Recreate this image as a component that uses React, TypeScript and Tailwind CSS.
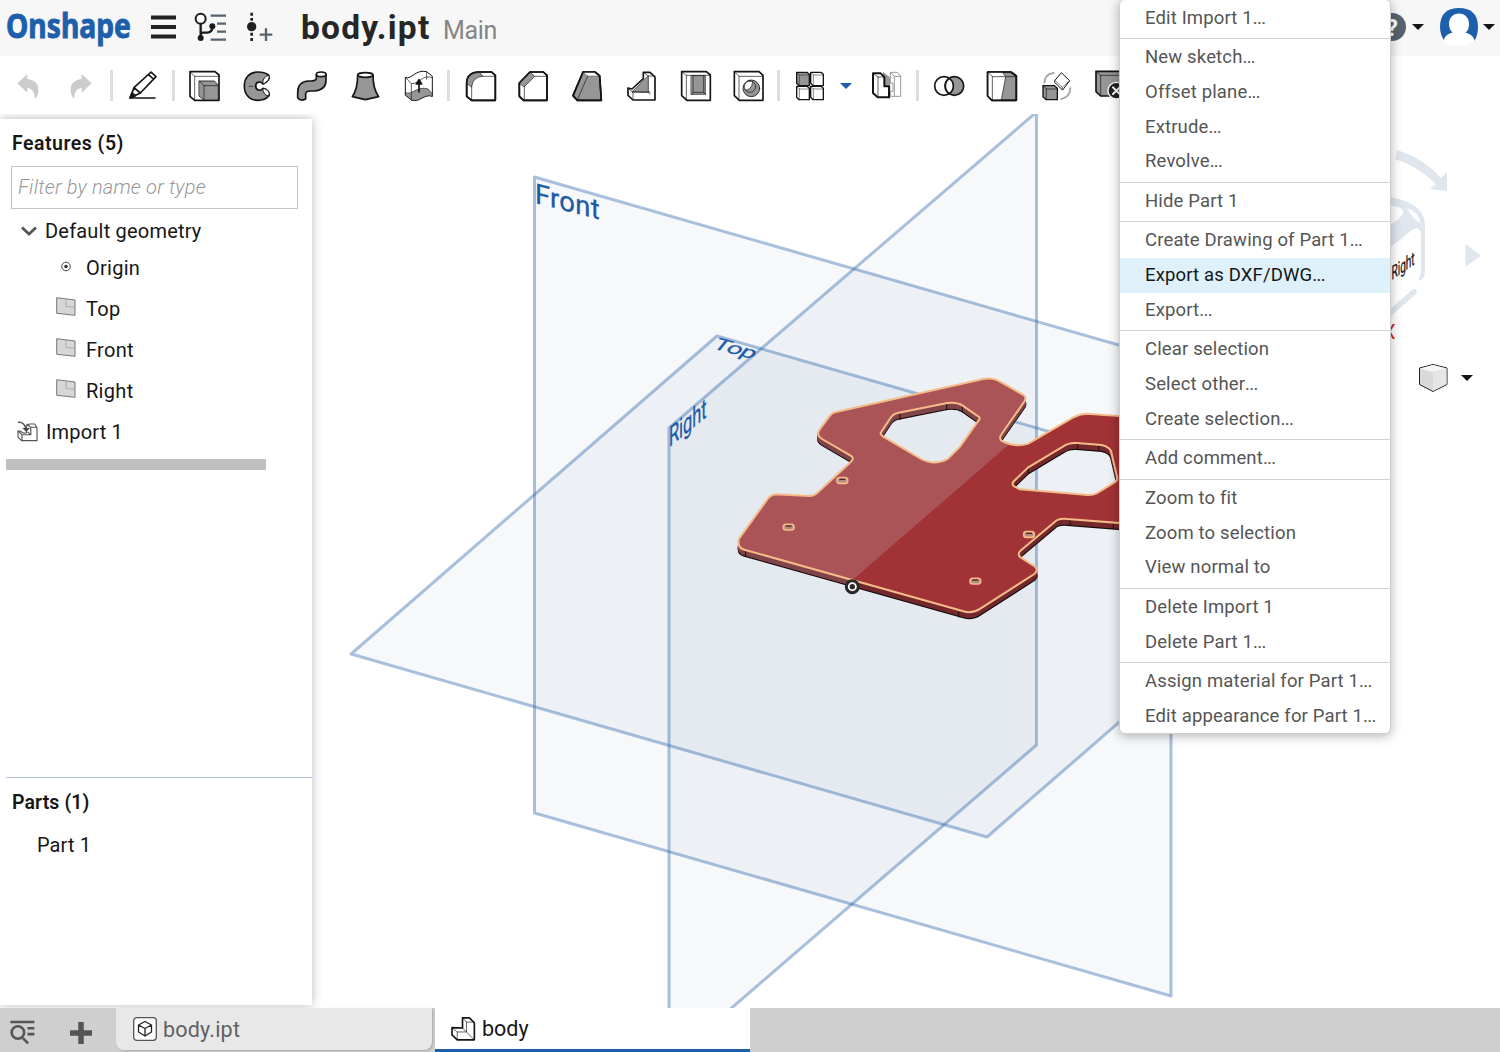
import type { ReactNode } from "react";

function Icon({ box, className = "", children }: { box: string; className?: string; children: ReactNode }) {
  return (
    <svg
      viewBox={box}
      fill="none"
      stroke="#151515"
      strokeWidth="5"
      strokeLinejoin="round"
      strokeLinecap="round"
      className={`h-[30px] w-[30px] shrink-0 overflow-visible ${className}`}
    >
      {children}
    </svg>
  );
}

function Divider({ className }: { className: string }) {
  return <div className={`h-[31px] w-[3px] shrink-0 bg-[#dedede] ${className}`} />;
}

const G = "#969696";

function Caret({ className }: { className: string }) {
  return (
    <svg viewBox="0 0 12 6" className={`h-1.5 w-3 shrink-0 ${className}`}>
      <path d="M0 0H12L6 6Z" fill="currentColor" />
    </svg>
  );
}

function Header() {
  return (
    <header className="flex h-14 shrink-0 items-center bg-[#f7f7f7] pb-[2px]">
      <svg viewBox="0 0 126 44" className="ml-[6px] h-11 w-[126px] overflow-visible">
        <text
          x="0"
          y="32.5"
          textLength="125"
          lengthAdjust="spacingAndGlyphs"
          fill="#1d5fab"
          stroke="#1d5fab"
          strokeWidth="0.9"
          className="font-['Noto_Sans'] text-[34px] font-bold"
        >
          Onshape
        </text>
      </svg>
      <svg viewBox="0 0 26 26" className="ml-[18px] h-[26px] w-[26px]">
        <path d="M1 3.5H26M1 13H26M1 22.5H26" stroke="#222" strokeWidth="4" />
      </svg>
      <svg viewBox="583 36 99 90" fill="none" className="ml-[18px] h-[30px] w-[33px] overflow-visible">
        <path d="M633 47H679M652 71H679M652 95H679M633 119H679" stroke="#56626d" strokeWidth="7" />
        <circle cx="603" cy="56" r="15" stroke="#1b1b1b" strokeWidth="6" fill="#fff" />
        <path d="M603 71V112M603 105Q604 97 613 98H624Q638 96 638 82" stroke="#1b1b1b" strokeWidth="7" />
        <circle cx="603" cy="114" r="9" fill="#1b1b1b" />
        <circle cx="638" cy="79" r="9" fill="#1b1b1b" />
      </svg>
      <svg viewBox="738 36 81 90" fill="none" className="ml-[19px] h-[30px] w-[27px]">
        <path d="M755 38V47M755 54V62M755 98V107M755 114V123" stroke="#222" strokeWidth="8" />
        <circle cx="755" cy="80" r="14" fill="#222" />
        <path d="M779 104H817M798 85V123" stroke="#56626d" strokeWidth="7" />
      </svg>
      <h1 className="ml-[28px] mt-[1px] w-[142px] whitespace-nowrap text-[33.5px] font-bold leading-none tracking-[1.2px] text-[#262626]">body.ipt</h1>
      <span className="mt-[7px] text-[25px] leading-none tracking-[-0.3px] text-[#858585]">Main</span>
      <div className="ml-auto flex items-center pr-[5px]">
        <svg viewBox="0 0 28 28" className="h-7 w-7">
          <circle cx="14" cy="14" r="14" fill="#56626d" />
          <text x="14" y="22.5" textAnchor="middle" fill="#fff" className="text-2xl font-bold">
            ?
          </text>
        </svg>
        <Caret className="ml-[6px] text-[#151515]" />
        <svg viewBox="0 0 38 38" className="ml-4 h-[38px] w-[38px]">
          <path d="M5 34Q0 27 0 19C0 6 7 0 19 0S38 6 38 19Q38 27 34 34Z" fill="#1d5fab" />
          <path d="M19 5.500C13 5.500 9 10 9 16C9 20 10.500 22.500 12.500 24.500C7 26 4 29 3.500 33.500Q19 42 35 33.500C34 29 31 26 25.500 24.500C28 22.500 29 20 29 16C29 10 25 5.500 19 5.500Z" fill="#fff" />
        </svg>
        <Caret className="ml-[5px] text-[#151515]" />
      </div>
    </header>
  );
}

function Toolbar() {
  return (
    <div className="flex h-[58px] shrink-0 items-center bg-white pt-px">
      <Icon box="39 210 90 90" className="ml-[13px]">
        <path d="M52 247L82 219V234Q116 238 115 267Q115 283 105 293Q105 264 82 260V275Z" fill="#ccc" stroke="none" />
      </Icon>
      <Icon box="195 210 90 90" className="ml-[22px]">
        <path d="M275 247L245 219V234Q211 238 212 267Q212 283 222 293Q222 264 245 260V275Z" fill="#ccc" stroke="none" />
      </Icon>
      <Divider className="ml-[15px]" />
      <Icon box="384 210 90 90" className="ml-[15px]">
        <path d="M390 291H465M390 291L402 260L453 213L468 227L421 276ZM445 220L460 234M402 260L421 276" />
        <path d="M390 291L396 276L406 284Z" fill="#151515" />
      </Icon>
      <Divider className="ml-[14px]" />
      <Icon box="570 210 90 90" className="ml-[15px]">
        <path d="M570 212H645L657 222V298H584L570 286Z" fill="#fff" />
        <path d="M570 212L584 226H656M584 226V297" strokeWidth="2" />
        <path d="M598 240H642L655 252V297H612L598 286Z" fill={G} strokeWidth="2.500" />
        <path d="M598 240L612 254H655M612 254V297" strokeWidth="2" />
      </Icon>
      <Icon box="726 210 90 90" className="ml-[22px]">
        <path d="M806 223C812 233 801 244 789 249C782 239 767 242 767 255C767 268 782 272 789 262C801 264 812 275 806 285C798 295 786 298 773 298C746 298 733 278 733 255C733 231 748 213 773 213C788 213 799 215 806 223Z" fill={G} />
        <path d="M806 223C800 222 786 233 789 249C801 244 812 233 806 223ZM806 285C800 286 787 277 789 262C801 264 812 275 806 285Z" fill="#fff" strokeWidth="3" />
        <path d="M747 256H758M764 256H770" strokeWidth="2" />
      </Icon>
      <Icon box="21 210 90 90" className="ml-[25px]">
        <path d="M79 221V230Q80 239 65 240H56Q23 241 23 276V290Q31 302 47 294V278Q48 270 61 270H72Q108 268 108 238V221Z" fill={G} />
        <ellipse cx="93.500" cy="220" rx="14.500" ry="7" fill="#fff" />
      </Icon>
      <Icon box="180 210 90 90" className="ml-[23px]">
        <path d="M203 222C203 249 200 268 187 287L226 296L266 287C251 266 249 247 249 222Z" fill={G} />
        <ellipse cx="226" cy="222" rx="23" ry="7" fill="#fff" />
      </Icon>
      <Icon box="342 210 90 90" className="ml-[24px]">
        <path d="M347 230C365 236 377 204 410 212L427 226V286C405 276 388 306 364 297L347 283Z" fill="#fff" strokeWidth="3" />
        <path d="M347 275C365 285 382 253 414 264L427 279V286C405 276 388 306 364 297L347 283Z" fill={G} strokeWidth="2" />
        <path d="M347 230L364 248C387 250 398 218 427 230M364 248V296M410 214V235" strokeWidth="2" />
        <path d="M387 273V239M379 249L387 236L395 249Z" fill="#151515" strokeWidth="5" />
      </Icon>
      <Divider className="ml-[13px]" />
      <Icon box="527 210 90 90" className="ml-[16px]">
        <path d="M529 246Q530 214 566 213H604L615 223V298H544L529 286Z" fill="#fff" />
        <path d="M529 246Q530 214 566 213L578 226Q547 227 544 257Z" fill={G} strokeWidth="2" />
        <path d="M544 257V297M578 226H614" strokeWidth="2" />
        <path d="M529 246Q530 214 566 213H604L615 223V298H544L529 286Z" />
      </Icon>
      <Icon box="684 210 90 90" className="ml-[22px]">
        <path d="M688 246L720 213H760L771 223V298H701L688 286Z" fill="#fff" />
        <path d="M688 246L720 213L734 226L703 257Z" fill={G} strokeWidth="2" />
        <path d="M703 257V297M734 226H770" strokeWidth="2" />
        <path d="M688 246L720 213H760L771 223V298H701L688 286Z" />
      </Icon>
      <Icon box="36 42 90 90" className="ml-[24px]">
        <path d="M69 45H105L119 57L124 130H52L39 116Z" fill={G} />
        <path d="M69 45L83 57H118L105 45Z" fill="#fff" strokeWidth="1" />
        <path d="M83 57L52 129" strokeWidth="2" />
        <path d="M69 45H105L119 57L124 130H52L39 116Z" />
      </Icon>
      <Icon box="201 42 90 90" className="ml-[25px]">
        <path d="M250 46H270L285 60V129H219L204 115V93L216 96L250 65Z" fill="#fff" />
        <path d="M265 57V106L217 105Z" fill={G} strokeWidth="2" />
        <path d="M250 46L265 57H285M204 94L219 107V128M265 106L270 112M217 105H270" strokeWidth="2" />
      </Icon>
      <Icon box="363 42 90 90" className="ml-[24px]">
        <path d="M365 44H439L451 54V130H381L365 116Z" fill="#fff" />
        <path d="M394 56H436V112H394Z" fill={G} strokeWidth="2" />
        <path d="M366 45L379 55H450M379 55V129M399 56V106H431V56M394 112L399 106M436 112L431 106" strokeWidth="2" />
      </Icon>
      <Icon box="522 42 90 90" className="ml-[23px]">
        <path d="M523 44H597L609 55V130H538L523 116Z" fill="#fff" />
        <path d="M523 44L537 58H608M537 58V129" strokeWidth="2" />
        <circle cx="574" cy="94" r="25" fill={G} strokeWidth="2.500" />
        <circle cx="570" cy="89" r="17" fill={G} strokeWidth="2" />
        <path d="M570 72A17 17 0 0 0 556 99Q574 100 578 75Q575 72 570 72Z" fill="#fff" strokeWidth="2" />
      </Icon>
      <Divider className="ml-[13px]" />
      <Icon box="705 42 90 90" className="ml-[15px]">
        {[[710, 46], [752, 46], [710, 88], [752, 88]].map(([x, y], i) => (
          <g key={i} transform={`translate(${x} ${y})`}>
            <path d="M0 0H31L38 6V40H7L0 33Z" fill={i === 0 ? G : "#fff"} strokeWidth="4" />
            <path d="M0 0L8 8H38M8 8V40" strokeWidth="1.500" />
          </g>
        ))}
      </Icon>
      <Caret className="ml-[15px] text-[#1d5fab]" />
      <Icon box="96 42 90 90" className="ml-[20px]">
        <path d="M152 46H172L182 58V118H151V103H159V78H152ZM152 46L163 58H182M163 58V118" fill="#fff" stroke="#999" strokeWidth="3" />
        <path d="M129 44L151 62V127L129 106Z" fill="#999" stroke="none" />
        <path d="M99 49H122L133 60V88H147V121H113L99 108Z" fill="#fff" strokeWidth="6" />
        <path d="M100 50L114 60H132M114 60V120" strokeWidth="2" />
      </Icon>
      <Divider className="ml-[14px]" />
      <Icon box="282 42 90 90" className="ml-[15px]">
        <circle cx="312" cy="87" r="28" fill="#fff" />
        <circle cx="343" cy="87" r="28" fill={G} />
        <path d="M328 64A28 28 0 0 1 328 110A28 28 0 0 1 328 64Z" fill="#fff" />
      </Icon>
      <Icon box="441 42 90 90" className="ml-[23px]">
        <path d="M443 45H513L529 57V130H456L443 117Z" fill={G} />
        <path d="M443 45H487L497 59L484 129H456L443 117Z" fill="#fff" strokeWidth="2" />
        <path d="M444 46L457 59H528M457 59V128" strokeWidth="2" />
        <path d="M443 45H513L529 57V130H456L443 117Z" />
      </Icon>
      <Icon box="603 42 90 90" className="ml-[24px]">
        <path d="M613 77Q614 51 641 48M691 94Q690 120 664 126" stroke="#aaa" strokeWidth="6" />
        <path d="M645 70L664 47L689 71L668 99L645 77Z" fill="#fff" strokeWidth="3" />
        <path d="M645 70L667 91L689 71M667 91V98" strokeWidth="1.500" />
        <path d="M609 86H643L652 94V128H619L609 119Z" fill={G} strokeWidth="4" />
        <path d="M609 86L619 96H652M619 96V128" strokeWidth="2" />
      </Icon>
      <Icon box="765 42 90 90" className="ml-[24px]">
        <path d="M768 43H850V117H782L768 104Z" fill={G} />
        <path d="M768 43L782 55H850M782 55V117" strokeWidth="2" />
        <circle cx="829" cy="101" r="25" fill="#222" stroke="#fff" strokeWidth="4" />
        <path d="M819 91L839 111M839 91L819 111" stroke="#fff" strokeWidth="6" />
      </Icon>
    </div>
  );
}

function PlaneIcon() {
  return (
    <svg viewBox="0 0 20 19" className="h-[19px] w-5">
      <path d="M.7.7L19 3V18.300L.7 16.300Z" fill="#d7d7d7" stroke="#777" />
      <path d="M10 2V9.500L19 10.300" fill="none" stroke="#aaa" />
    </svg>
  );
}

function Sidebar() {
  return (
    <aside className="relative mt-[5px] flex h-[886px] w-[312px] flex-col bg-white text-[20px] text-[#161616] shadow-[0_0_10px_rgba(0,0,0,0.28)]">
      <h2 className="ml-3 mt-[13px] h-6 text-[19.5px] font-semibold leading-6 tracking-[0.5px]">Features (5)</h2>
      <div className="ml-[11px] mt-[10px] flex h-[43px] w-[287px] shrink-0 items-center border border-[#c4c4c4] px-[6px] pb-px text-[20px] font-light italic tracking-[0.2px] text-[#999]">
        Filter by name or type
      </div>
      <div className="mt-[4px] flex h-9 items-center pl-[21px]">
        <svg viewBox="0 0 16 10" className="mr-2 h-2.5 w-4">
          <path d="M1 1.500L8 8L15 1.500" fill="none" stroke="#555" strokeWidth="2.800" />
        </svg>
        <span className="tracking-[0.2px]">Default geometry</span>
      </div>
      <div className="flex h-[37px] items-center pl-14">
        <svg viewBox="0 0 20 20" className="h-5 w-5">
          <circle cx="10" cy="8.500" r="4.300" fill="none" stroke="#444" />
          <circle cx="10" cy="8.500" r="1.800" fill="#333" />
        </svg>
        <span className="ml-[10px] tracking-[0.25px]">Origin</span>
      </div>
      {["Top", "Front", "Right"].map((name) => (
        <div key={name} className="flex h-[41px] items-center pl-14 pt-1">
          <div className="pb-1">
            <PlaneIcon />
          </div>
          <span className="ml-[10px] tracking-[0.3px]">{name}</span>
        </div>
      ))}
      <div className="mt-[2px] flex h-[41px] items-center pl-[17px]">
        <svg viewBox="51 914 64 62" className="mr-2 h-[21px] w-[21px]" fill="#fff" stroke="#555" strokeWidth="3.500">
          <path d="M80 928L89 922H105L112 934V973H65L54 962V944L60 944L72 950L80 949Z" />
          <path d="M54 944L66 955H93V932H112M66 955V973M80 922L93 932M93 955L83 946" fill="none" />
          <path d="M54 917Q72 915 78 935" fill="none" strokeWidth="5" />
          <path d="M67 934H91L79 946Z" fill="#444" stroke="none" />
        </svg>
        <span className="tracking-[0.15px]">Import 1</span>
      </div>
      <div className="ml-[6px] mt-[7px] h-[11px] w-[260px] bg-[#bfbfbf]" />
      <div className="ml-[6px] mt-auto h-[1.5px] bg-[#b3c3dc]" />
      <div className="h-[227px]">
        <h2 className="ml-3 mt-[13px] text-[19.5px] font-semibold leading-6 tracking-[0.1px]">Parts (1)</h2>
        <p className="ml-[37px] mt-[18px] leading-6 tracking-[0.1px]">Part 1</p>
      </div>
    </aside>
  );
}

const OUTLINE =
  "M56 545Q54 538 62 529L143 417Q152 404 168 403L268 408Q280 408 289 401L390 308Q406 296 392 287L306 237Q288 225 298 210L330 167Q336 158 348 156L790 57Q815 52 833 61L907 103Q921 110 914 123L845 222Q834 237 848 244Q886 263 925 251L1060 172Q1080 161 1100 161L1210 169V490L1042 477Q1014 474 1003 487L903 571Q889 583 903 593L942 618Q958 629 943 642L781 746Q757 762 730 754L73 569Q54 564 56 545Z";
const HOLES =
  "M483 217Q479 222 490 230L598 294Q642 320 683 297L720 260L778 178Q782 172 770 166L727 136Q710 126 682 129L536 158Q520 161 513 172ZM880 365Q874 374 884 380L900 388L1095 404Q1116 407 1130 400L1187 365Q1193 360 1191 350L1175 282Q1174 262 1145 255L1070 249Q1047 247 1030 259L925 322Z";
const DEPTHS = [18, 16, 14, 12, 10, 8, 6, 4, 2];

function PartBody() {
  return (
    <g transform="translate(720 360) scale(.33333)">
      <defs>
        <clipPath id="leftHalf">
          <path d="M0 0H1150L865 255L395 662L300 720H0Z" />
        </clipPath>
      </defs>
      {DEPTHS.map((d) => (
        <path
          key={d}
          d={OUTLINE + HOLES}
          transform={`translate(0 ${d})`}
          fillRule="evenodd"
          fill="#74292d"
          stroke={d === 18 ? "#150b0c" : "#74292d"}
          strokeWidth={d === 18 ? "6" : "3"}
        />
      ))}
      <g clipPath="url(#leftHalf)">
        {DEPTHS.slice(1).map((d) => (
          <path key={d} d={OUTLINE + HOLES} transform={`translate(0 ${d})`} fillRule="evenodd" fill="none" stroke="#83474c" strokeWidth="3" />
        ))}
      </g>
      <path d="M77 573V588M716 756V772M1050 480V496M1180 488V506M540 162V180M680 132V151M727 138V156M1073 250V267M1136 257V274M925 325V341" stroke="#1d0d0e" strokeWidth="3" />
      <path d={OUTLINE + HOLES} fillRule="evenodd" fill="#a13236" />
      <path d={OUTLINE + HOLES} fillRule="evenodd" fill="#aa5458" clipPath="url(#leftHalf)" />
      <path d={OUTLINE + HOLES} fill="none" stroke="#f5bc88" strokeWidth="6" />
      {[[367, 361], [206, 501], [927, 523], [766, 663]].map(([x, y]) => (
        <g key={x}>
          <rect x={x - 16} y={y - 8} width="32" height="17" rx="8" fill="#b58a82" stroke="#f5bc88" strokeWidth="5" />
          <path d={`M${x - 9} ${y - 3}H${x + 9}`} stroke="#4b2426" strokeWidth="4" />
        </g>
      ))}
      <circle cx="397" cy="680" r="18" fill="#fff" stroke="#292929" strokeWidth="9" />
      <circle cx="397" cy="680" r="8" fill="#292929" />
    </g>
  );
}

function Viewport() {
  return (
    <svg viewBox="0 114 1500 894" className="absolute inset-0 h-[894px] w-[1500px]">
      <g fill="#285a96" fillOpacity=".045" stroke="#2b67ad" strokeOpacity=".4" strokeWidth="3" strokeLinejoin="round">
        <path d="M534.500 177L1171 360V996L534.500 813Z" />
        <path d="M717 336L1353 519L987 837L351 654Z" />
        <path d="M669 428L1036.500 112V745L669 1062Z" />
      </g>
      <g fill="#1d59a5" stroke="#1d59a5" strokeWidth=".3" className="text-[28px]">
        <text transform="matrix(.98 .25 0 1 535 203)" textLength="66">Front</text>
        <text transform="matrix(.92 .25 -.42 .52 711 348)" textLength="45">Top</text>
        <text transform="matrix(.65 -.53 0 1 669 447.500)" textLength="58" lengthAdjust="spacingAndGlyphs">Right</text>
      </g>
      <PartBody />
      <g fill="#dfe6ee">
        <path d="M1397 150Q1423 158 1441 178L1447 172V191L1430 189L1436 184Q1419 167 1395 159Z" />
        <path d="M1465.500 244L1481 255.500L1465.500 267Z" />
        <path d="M1380 196Q1425 200 1425 225V272Q1425 279 1418 281Q1421 276 1421 270V235Q1420 225 1412 230L1391 247L1380 250Z" />
        <path d="M1380 318L1412 290Q1419 287 1416 294L1391 316L1380 325Z" />
      </g>
      <path d="M1380 205Q1403 205 1403 212Q1402 220 1380 230Z" fill="#fff" />
      <path d="M1407 208Q1413 219 1421 224Q1418 211 1407 208Z" fill="#fff" />
      <text transform="matrix(.56 -.38 0 1.050 1391.500 280)" fill="#151515" stroke="#151515" strokeWidth=".3" className="text-[18px]">Right</text>
      <text x="1383" y="339" fill="#d11f1f" className="text-xl">X</text>
      <path d="M1419.500 368L1433 364.500L1447 368V384.500L1433 391.500L1419.500 384.500Z" fill="#d9d9d9" stroke="#222" />
      <path d="M1420 368.500L1433 372L1446.500 368.500L1433 365Z" fill="#f7f7f7" />
      <path d="M1433 372V391L1446.500 384V368.500Z" fill="#e6e6e6" />
      <path d="M1461 375H1473L1467 381Z" fill="#151515" />
    </svg>
  );
}

const MENU = [
  ["Edit Import 1..."],
  ["New sketch...", "Offset plane...", "Extrude...", "Revolve..."],
  ["Hide Part 1"],
  ["Create Drawing of Part 1...", "Export as DXF/DWG...", "Export..."],
  ["Clear selection", "Select other...", "Create selection..."],
  ["Add comment..."],
  ["Zoom to fit", "Zoom to selection", "View normal to"],
  ["Delete Import 1", "Delete Part 1..."],
  ["Assign material for Part 1...", "Edit appearance for Part 1..."],
];

function MenuLabel({ label }: { label: string }) {
  const [text, dots] = label.endsWith("...") ? [label.slice(0, -3), "..."] : [label, ""];
  return (
    <span>
      {text}
      {dots && <span className="tracking-[-0.7px]">{dots}</span>}
    </span>
  );
}

function ContextMenu() {
  return (
    <div className="absolute left-[1119px] top-[-1px] w-[272px] rounded-md border border-[#cfcfcf] bg-white pt-[0.3px] shadow-[0_2px_12px_rgba(0,0,0,0.3)]">
      {MENU.map((group, i) => (
        <ul key={i} className={i ? "mt-[3px] border-t border-[#d3d3d3] pt-[0.75px]" : ""}>
          {group.map((label) => (
            <li
              key={label}
              className={`flex h-[34.75px] items-center whitespace-nowrap pl-[25px] pt-[1.5px] text-[18.5px] tracking-[0.15px] ${
                label.includes("DXF") ? "bg-[#def0fa] text-[#161616]" : "text-[#555]"
              }`}
            >
              <MenuLabel label={label} />
            </li>
          ))}
        </ul>
      ))}
    </div>
  );
}

function TabBar() {
  return (
    <footer className="flex h-11 shrink-0 bg-[#cfcfcf] text-[21.5px]">
      <div className="flex w-[116px] items-center pl-[10px] pt-[5px]">
        <svg viewBox="29 77 76 76" className="h-[25px] w-[25px]" fill="none" stroke="#555" strokeWidth="8">
          <path d="M30 83H103M82 102H103M82 120H103M68 132L84 148" />
          <circle cx="53" cy="115" r="19" />
        </svg>
        <svg viewBox="0 0 22 22" className="ml-[35px] h-[22px] w-[22px]">
          <path d="M11 0V22M0 11H22" stroke="#555" strokeWidth="5.500" />
        </svg>
      </div>
      <div className="flex h-[41.5px] w-[316px] items-center rounded-b-lg bg-[#e8e8e8] pl-[17px] pt-px text-[#616161] shadow-[1px_1px_2px_#aaa]">
        <svg viewBox="0 0 24 24" className="mr-[6px] h-6 w-6" fill="none" stroke="#222" strokeWidth="1.300" strokeLinejoin="round">
          <rect x=".7" y=".7" width="22.600" height="22.600" rx="3" fill="#fff" stroke="#555" />
          <path d="M12 4.500L18.500 8V15L12 19L5.500 15V8ZM5.500 8L12 11.500L18.500 8M12 11.500V19" />
        </svg>
        <span className="pt-px tracking-[0.2px]">body.ipt</span>
      </div>
      <div className="ml-[3px] flex w-[315px] items-center border-b-[3px] border-[#1d5fab] bg-white pl-4 pt-px text-[#161616]">
        <svg viewBox="1310 65 76 72" className="mr-[6px] h-6 w-[25px]" fill="#fff" stroke="#151515" strokeWidth="5" strokeLinejoin="round">
          <path d="M1345 67H1366L1381 82V134H1329L1313 119V97L1345 98Z" />
          <path d="M1314 98L1329 110H1357L1381 134M1345 98L1357 110V80H1380M1346 68L1357 80M1329 110V133" fill="none" strokeWidth="2" />
        </svg>
        <span className="pt-px">body</span>
      </div>
    </footer>
  );
}

export default function App() {
  return (
    <div className="relative flex h-[1052px] w-[1500px] flex-col overflow-hidden bg-white font-['Roboto',sans-serif]">
      <Header />
      <Toolbar />
      <main className="relative h-[894px] shrink-0 overflow-hidden">
        <Viewport />
        <Sidebar />
      </main>
      <TabBar />
      <ContextMenu />
    </div>
  );
}
